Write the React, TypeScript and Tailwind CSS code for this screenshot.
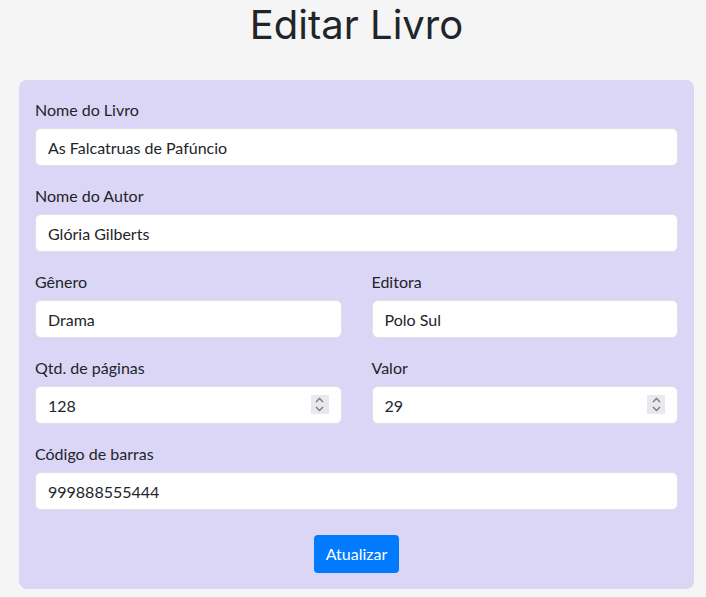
import React from 'react';

const labelCls = 'mb-[6px] block pt-[2px] text-base leading-6 text-[#212529]';
const inputCls =
  'block h-[38px] w-full rounded-[6px] border border-[#dee2e6] bg-white px-3 text-base text-[#212529] outline-none';

function Spinner() {
  return (
    <div className="pointer-events-none absolute right-[13px] top-[9px] flex h-[19px] w-[18px] items-center justify-center bg-[#e9e9ed]">
      <svg width="9" height="15" viewBox="0 0 9 15" fill="none" stroke="#76767c" strokeWidth="1.3">
        <path d="M1 5 L4.5 1.5 L8 5" />
        <path d="M1 10 L4.5 13.5 L8 10" />
      </svg>
    </div>
  );
}

function Field({ label, value, spin }: { label: string; value: string; spin?: boolean }) {
  return (
    <div className="mb-4">
      <label className={labelCls}>{label}</label>
      <div className="relative">
        <input className={inputCls} defaultValue={value} readOnly />
        {spin ? <Spinner /> : null}
      </div>
    </div>
  );
}

export default function App() {
  return (
    <div
      className="min-h-[597px] bg-[#f5f5f5] pl-[19px] pr-[12px] pb-[9px]"
      style={{ fontFamily: 'Lato, "Noto Sans", sans-serif' }}
    >
      <h1
        className="flex h-[80px] items-start justify-center pt-[1px] text-[40px] leading-[48px] text-[#212529]"
        style={{ fontFamily: 'Inter, "Noto Sans", sans-serif' }}
      >
        Editar Livro
      </h1>
      <div className="rounded-[8px] bg-[#dcd6f6] p-4">
        <Field label="Nome do Livro" value="As Falcatruas de Pafúncio" />
        <Field label="Nome do Autor" value="Glória Gilberts" />
        <div className="grid grid-cols-2 gap-x-[30px]">
          <Field label="Gênero" value="Drama" />
          <Field label="Editora" value="Polo Sul" />
          <Field label="Qtd. de páginas" value="128" spin />
          <Field label="Valor" value="29" spin />
        </div>
        <Field label="Código de barras" value="999888555444" />
        <div className="flex justify-center pt-[9px]">
          <button className="h-[38px] rounded-[4px] bg-[#007bff] px-3 text-base text-white">
            Atualizar
          </button>
        </div>
      </div>
    </div>
  );
}
